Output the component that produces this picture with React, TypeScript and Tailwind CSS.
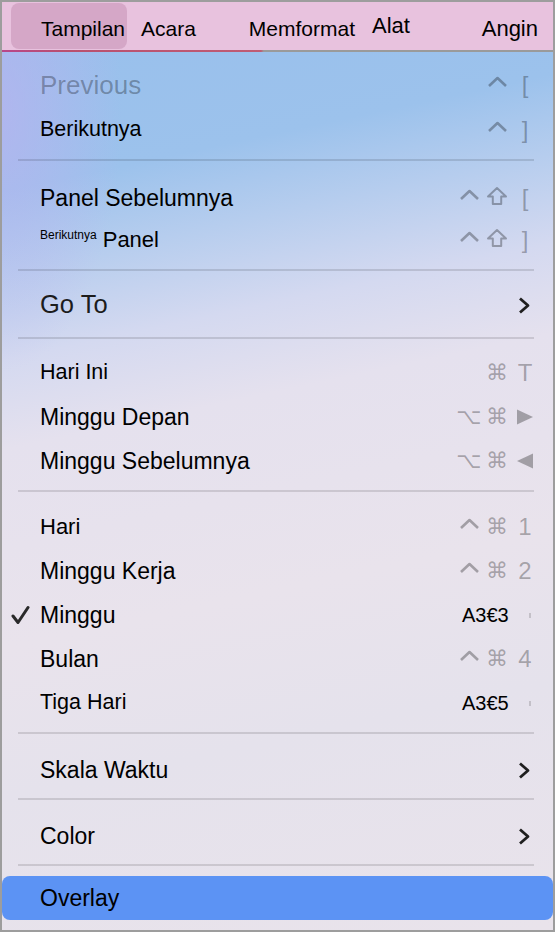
import type { ReactNode } from "react";

const font = "font-['Liberation_Sans',Arial,sans-serif]";
const sym = "font-['DejaVu_Sans',sans-serif]";

const Caret = () => (
  <svg width="21" height="14" viewBox="0 0 21 14" className="-mt-[6px]">
    <polyline points="2,11 10.5,3 19,11" fill="none" stroke="currentColor" strokeWidth="2.6" strokeLinejoin="round" />
  </svg>
);

const Shift = () => (
  <svg width="22" height="20" viewBox="0 0 22 20" className="-mt-[4px]">
    <path d="M11 2 L20 10.5 H15.2 V18 H6.8 V10.5 H2 Z" fill="none" stroke="currentColor" strokeWidth="2" strokeLinejoin="round" />
  </svg>
);

const Cmd = () => <span className={`${sym} text-[22px] leading-none`}>⌘</span>;
const Opt = () => <span className={`${sym} text-[22px] leading-none`}>⌥</span>;

const TriRight = () => (
  <svg width="18" height="18" viewBox="0 0 18 18">
    <polygon points="1,1.5 17,9 1,16.5" fill="currentColor" />
  </svg>
);

const TriLeft = () => (
  <svg width="18" height="18" viewBox="0 0 18 18">
    <polygon points="17,1.5 1,9 17,16.5" fill="currentColor" />
  </svg>
);

const Chevron = () => (
  <svg width="14" height="19" viewBox="0 0 14 19">
    <polyline points="3,2.5 11,9.5 3,16.5" fill="none" stroke="#1f1f1f" strokeWidth="2.8" strokeLinejoin="round" />
  </svg>
);

const Check = () => (
  <svg width="19" height="20" viewBox="0 0 19 20">
    <polyline points="2,11 7,17.5 17,2.5" fill="none" stroke="#2a2a2a" strokeWidth="3" strokeLinecap="round" strokeLinejoin="round" />
  </svg>
);

const Bracket = ({ c }: { c: string }) => (
  <span className={`${font} text-[24px] font-light leading-none`}>{c}</span>
);

const Num = ({ c }: { c: string }) => <span className="text-[24px] leading-none">{c}</span>;

const Keys = ({ a, b, c }: { a?: ReactNode; b?: ReactNode; c?: ReactNode }) => (
  <div className="grid grid-cols-[28px_28px_28px] items-center justify-items-center text-black/30">
    <div className="flex h-[24px] items-center">{a}</div>
    <div className="flex h-[24px] items-center">{b}</div>
    <div className="flex h-[24px] items-center">{c}</div>
  </div>
);

const Sep = () => <div className="ml-[16px] mr-[19px] h-[2px] bg-black/[0.12]" />;

type RowProps = {
  label: ReactNode;
  right?: ReactNode;
  checked?: boolean;
  className?: string;
  h?: string;
};

const Row = ({ label, right, checked, className = "text-[23px] text-black", h = "h-[44px]" }: RowProps) => (
  <div className={`flex ${h} items-center pr-[14px]`}>
    <div className="flex w-[38px] items-center pl-[9px]">{checked && <Check />}</div>
    <div className={`flex-1 leading-none ${className}`}>{label}</div>
    {right}
  </div>
);

const Direct = ({ text }: { text: string }) => (
  <div className="flex w-[84px] items-center">
    <span className={`${font} ml-[7px] text-[20px] leading-none text-black`}>{text}</span>
    <span className="ml-auto mr-[8px] h-[5px] w-[2px] bg-black/15" />
  </div>
);

const Sub = () => (
  <div className="flex w-[84px] justify-end pr-[8px]">
    <Chevron />
  </div>
);

export default function App() {
  return (
    <div className={`${font} flex h-[932px] w-[555px] flex-col overflow-hidden border-2 border-[#9d9d9d]`}>
      {/* Menu bar */}
      <div className="flex h-[48px] shrink-0 items-center bg-[#e8c2de] text-[21px] leading-none text-black">
        <div className="ml-[9px] flex h-[46px] w-[116px] items-center rounded-lg bg-[#d5a7c7] pl-[30px] pt-[4px]">
          Tampilan
        </div>
        <span className="ml-[14px] pt-[4px]">Acara</span>
        <span className="ml-[53px] pt-[4px]">Memformat</span>
        <span className="ml-[17px] text-[22px]">Alat</span>
        <span className="ml-auto mr-[15px] pt-[5px] text-[22px]">Angin</span>
      </div>
      <div className="h-[2px] shrink-0 bg-[linear-gradient(to_right,#b8478a_0,#b9506f_12%,#bf5c74_47%,#9a9a9a_47.5%,#9a9a9a_100%)]" />

      {/* Menu */}
      <div className="flex flex-1 flex-col bg-[radial-gradient(ellipse_120px_260px_at_0_60px,rgba(190,175,240,0.6),transparent),linear-gradient(168deg,#99c0ec_0%,#9cc2ec_14%,#b6cdee_22%,#d4d9f0_31%,#e5e1ee_40%,#e9e3ec_60%,#e5e2ec_75%,#e9e3eb_100%)]">
        <div className="pb-[6px] pt-[11px]">
          <Row
            className="text-[26px] text-black/30"
            label="Previous"
            right={<Keys b={<Caret />} c={<Bracket c="[" />} />}
          />
          <Row
            h="h-[46px]"
            className="text-[21.5px] text-black"
            label="Berikutnya"
            right={<Keys b={<Caret />} c={<Bracket c="]" />} />}
          />
        </div>
        <Sep />
        <div className="pb-[8px] pt-[16px]">
          <Row
            h="h-[42px]"
            label="Panel Sebelumnya"
            right={<Keys a={<Caret />} b={<Shift />} c={<Bracket c="[" />} />}
          />
          <Row
            h="h-[42px]"
            className="text-[22px] text-black"
            label={
              <>
                <span className="align-[8px] text-[12px]">Berikutnya</span>
                <span className="ml-[6px]">Panel</span>
              </>
            }
            right={<Keys a={<Caret />} b={<Shift />} c={<Bracket c="]" />} />}
          />
        </div>
        <Sep />
        <div className="pb-[10px] pt-[12px]">
          <Row className="text-[25.5px] text-[#1c1c1c]" label="Go To" right={<Sub />} />
        </div>
        <Sep />
        <div className="pb-[7px] pt-[12px]">
          <Row
            className="text-[21.5px] text-black"
            label="Hari Ini"
            right={<Keys b={<Cmd />} c={<span className="text-[24px] leading-none">T</span>} />}
          />
          <Row label="Minggu Depan" right={<Keys a={<Opt />} b={<Cmd />} c={<TriRight />} />} />
          <Row label="Minggu Sebelumnya" right={<Keys a={<Opt />} b={<Cmd />} c={<TriLeft />} />} />
        </div>
        <Sep />
        <div className="pb-[7px] pt-[13px]">
          <Row
            className="text-[22px] text-black"
            label="Hari"
            right={<Keys a={<Caret />} b={<Cmd />} c={<Num c="1" />} />}
          />
          <Row label="Minggu Kerja" right={<Keys a={<Caret />} b={<Cmd />} c={<Num c="2" />} />} />
          <Row checked label="Minggu" right={<Direct text="A3€3" />} />
          <Row label="Bulan" right={<Keys a={<Caret />} b={<Cmd />} c={<Num c="4" />} />} />
          <Row className="text-[21.5px] text-black" label="Tiga Hari" right={<Direct text="A3€5" />} />
        </div>
        <Sep />
        <div className="pb-[6px] pt-[14px]">
          <Row label="Skala Waktu" right={<Sub />} />
        </div>
        <Sep />
        <div className="pb-[6px] pt-[14px]">
          <Row label="Color" right={<Sub />} />
        </div>
        <Sep />
        <div className="pt-[10px]">
          <div className="flex h-[44px] items-center rounded-lg bg-[#5c93f4] pl-[38px] text-[23px] leading-none text-black">
            Overlay
          </div>
        </div>
      </div>
    </div>
  );
}
